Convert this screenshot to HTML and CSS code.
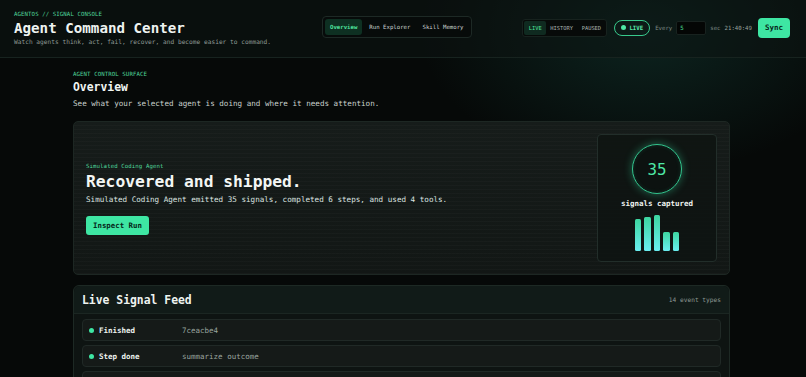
FILE: index.html
```html
<!DOCTYPE html>
<html lang="en">
<head>
    <meta charset="UTF-8">
    <meta name="viewport" content="width=device-width, initial-scale=1.0">
    <title>Agent Command Center</title>
    <link rel="stylesheet" href="styles.css">
</head>
<body>
    <!-- Top Bar -->
    <header class="topbar">
        <div class="brand">
            <div class="eyebrow">AGENTOS // SIGNAL CONSOLE</div>
            <h1>Agent Command Center</h1>
            <p>Watch agents think, act, fail, recover, and become easier to command.</p>
        </div>

        <nav class="tabs">
            <a class="tab active">Overview</a>
            <a class="tab">Run Explorer</a>
            <a class="tab">Skill Memory</a>
        </nav>

        <div class="controls">
            <div class="segmented">
                <span class="seg active">LIVE</span>
                <span class="seg">HISTORY</span>
                <span class="seg">PAUSED</span>
            </div>
            <span class="live-pill"><span class="dot"></span>LIVE</span>
            <span class="muted">Every</span>
            <input class="interval" type="text" value="5">
            <span class="muted">sec</span>
            <span class="clock">21:40:49</span>
            <button class="sync">Sync</button>
        </div>
    </header>

    <main class="page">
        <div class="eyebrow">AGENT CONTROL SURFACE</div>
        <h2>Overview</h2>
        <p class="lead">See what your selected agent is doing and where it needs attention.</p>

        <!-- Hero Card -->
        <section class="hero">
            <div class="hero-text">
                <div class="eyebrow">Simulated Coding Agent</div>
                <h3>Recovered and shipped.</h3>
                <p>Simulated Coding Agent emitted 35 signals, completed 6 steps, and used 4 tools.</p>
                <button class="inspect">Inspect Run</button>
            </div>

            <div class="stat">
                <div class="ring">35</div>
                <div class="stat-label">signals captured</div>
                <div class="bars">
                    <span class="bar" style="height: 32px"></span>
                    <span class="bar" style="height: 34px"></span>
                    <span class="bar" style="height: 36px"></span>
                    <span class="bar" style="height: 19px"></span>
                    <span class="bar" style="height: 19px"></span>
                </div>
            </div>
        </section>

        <!-- Feed -->
        <section class="feed">
            <div class="feed-head">
                <h3>Live Signal Feed</h3>
                <span class="count">14 event types</span>
            </div>
            <div class="rows">
                <div class="row"><span class="dot"></span><strong>Finished</strong><span class="val">7ceacbe4</span></div>
                <div class="row"><span class="dot"></span><strong>Step done</strong><span class="val">summarize outcome</span></div>
                <div class="row"><span class="dot"></span><strong>Tool result</strong><span class="val">write_file</span></div>
            </div>
        </section>
    </main>
</body>
</html>
```

FILE: styles.css
```css
/* Base */
* {
    box-sizing: border-box;
}

body {
    margin: 0;
    font-family: "DejaVu Sans Mono", "Liberation Mono", monospace;
    color: #e6ede9;
    background:
        radial-gradient(ellipse 300px 190px at 80% 8%, rgba(30, 105, 92, 0.28), transparent 75%),
        #060908;
    height: 377px;
    overflow: hidden;
}

.eyebrow {
    font-size: 5.7px;
    line-height: 8px;
    color: #4fd69c;
    letter-spacing: 0.1px;
}

/* Top Bar */
.topbar {
    display: flex;
    justify-content: space-between;
    align-items: center;
    height: 58px;
    padding: 0 16px 0 14px;
    border-bottom: 1px solid #17231f;
    background: rgba(12, 20, 18, 0.55);
}

.brand .eyebrow {
    margin-top: -2px;
}

.brand h1 {
    margin: 2px 0 0;
    font-size: 14.2px;
    line-height: 16px;
    font-weight: bold;
    color: #eef3f0;
}

.brand p {
    margin: 2px 0 0;
    font-size: 6.2px;
    line-height: 8px;
    color: #8f9a95;
}

.tabs {
    display: flex;
    gap: 2px;
    padding: 2px;
    background: #070b0a;
    border: 1px solid #1d2925;
    border-radius: 4px;
    margin-top: -3px;
}

.tab {
    font-size: 5.7px;
    line-height: 16px;
    padding: 0 5px;
    color: #cdd5d1;
    border-radius: 3px;
}

.tab.active {
    background: #0e3022;
    color: #4ee39d;
    font-weight: bold;
}

.controls {
    display: flex;
    align-items: center;
    gap: 4px;
    margin-top: -2px;
}

.segmented {
    display: flex;
    padding: 1px;
    background: #070a09;
    border: 1px solid #17221e;
    border-radius: 3px;
    margin-right: 3px;
}

.seg {
    font-size: 5.4px;
    line-height: 14px;
    padding: 0 4.3px;
    color: #a9b3ae;
    border-radius: 2px;
}

.seg.active {
    background: #0f2a20;
    color: #4ee39d;
}

.live-pill {
    display: flex;
    align-items: center;
    gap: 3px;
    height: 16px;
    padding: 0 6px;
    border: 1px solid #38c98c;
    border-radius: 9px;
    font-size: 5.7px;
    font-weight: bold;
    color: #5ae8aa;
    margin-right: 1px;
}

.live-pill .dot {
    width: 5px;
    height: 5px;
    border-radius: 50%;
    background: #4ee7a5;
}

.muted {
    font-size: 5.7px;
    color: #7f8b86;
}

.interval {
    width: 30px;
    height: 14px;
    padding: 0 3px;
    background: #040605;
    border: 1px solid #18221f;
    border-radius: 2px;
    color: #4ee39d;
    font-family: inherit;
    font-size: 5.7px;
    outline: none;
}

.clock {
    font-size: 5.7px;
    color: #9aa59f;
    margin-right: 2px;
}

.sync {
    height: 20px;
    padding: 0 7px;
    border: none;
    border-radius: 4px;
    background: #3ee6a3;
    color: #06261a;
    font-family: inherit;
    font-size: 7.5px;
    font-weight: bold;
}

/* Page */
.page {
    padding: 12px 76px 0 73px;
}

.page h2 {
    margin: 2px 0 0;
    font-size: 11.4px;
    line-height: 14px;
    color: #f1f5f2;
}

.lead {
    margin: 4px 0 0;
    font-size: 7.6px;
    line-height: 11px;
    color: #c8d0cc;
}

/* Hero */
.hero {
    display: flex;
    justify-content: space-between;
    align-items: center;
    margin-top: 12px;
    padding: 12px;
    border: 1px solid #1d2723;
    border-radius: 5px;
    background:
        repeating-linear-gradient(0deg, rgba(255, 255, 255, 0.018) 0 1px, transparent 1px 4px),
        linear-gradient(180deg, #161c1a, #121715);
}

.hero-text h3 {
    margin: 2px 0 0;
    font-size: 16.3px;
    line-height: 19px;
    color: #f3f6f4;
}

.hero-text p {
    margin: 3px 0 0;
    font-size: 7.6px;
    line-height: 11px;
    color: #dde4e0;
}

.inspect {
    margin-top: 11px;
    height: 19px;
    padding: 0 7px;
    border: none;
    border-radius: 3px;
    background: #3ee6a3;
    color: #06261a;
    font-family: inherit;
    font-size: 7.4px;
    font-weight: bold;
}

.stat {
    width: 120px;
    display: flex;
    flex-direction: column;
    align-items: center;
    padding: 9px 0 10px;
    background: rgba(14, 20, 18, 0.85);
    border: 1px solid #222e2a;
    border-radius: 4px;
}

.ring {
    width: 50px;
    height: 50px;
    border-radius: 50%;
    border: 1.5px solid #33c48d;
    box-shadow: 0 0 9px rgba(52, 211, 153, 0.45), inset 0 0 4px rgba(52, 211, 153, 0.15);
    background: #0c1210;
    display: flex;
    align-items: center;
    justify-content: center;
    font-size: 15.8px;
    color: #4ee7a5;
}

.stat-label {
    margin-top: 5px;
    font-size: 7.5px;
    line-height: 10px;
    font-weight: bold;
    color: #eef3f0;
}

.bars {
    display: flex;
    align-items: flex-end;
    gap: 3px;
    height: 36px;
    margin-top: 6px;
}

.bar {
    width: 6.5px;
    border-radius: 1.5px;
    background: linear-gradient(180deg, #3dd6a0, #6aeef0);
}

/* Feed */
.feed {
    margin-top: 10px;
    border: 1px solid #1d2924;
    border-radius: 6px;
    background: #0e1412;
}

.feed-head {
    display: flex;
    justify-content: space-between;
    align-items: center;
    height: 28px;
    padding: 0 8px 0 8px;
    background: #111b18;
    border-bottom: 1px solid #1b2622;
    border-radius: 6px 6px 0 0;
}

.feed-head h3 {
    margin: 0;
    font-size: 11.4px;
    color: #eef3f0;
}

.count {
    font-size: 6.2px;
    color: #8d9893;
}

.rows {
    display: flex;
    flex-direction: column;
    gap: 4px;
    padding: 5px 8px 8px;
}

.row {
    display: grid;
    grid-template-columns: 5px 78px 1fr;
    column-gap: 5px;
    align-items: center;
    height: 22px;
    padding-left: 6px;
    background: #151a18;
    border: 1px solid #202926;
    border-radius: 4px;
}

.row .dot {
    width: 5px;
    height: 5px;
    border-radius: 50%;
    background: #3ee6a3;
}

.row strong {
    font-size: 7.5px;
    color: #eef3f0;
}

.val {
    font-size: 7.5px;
    color: #9aa59f;
}
```
